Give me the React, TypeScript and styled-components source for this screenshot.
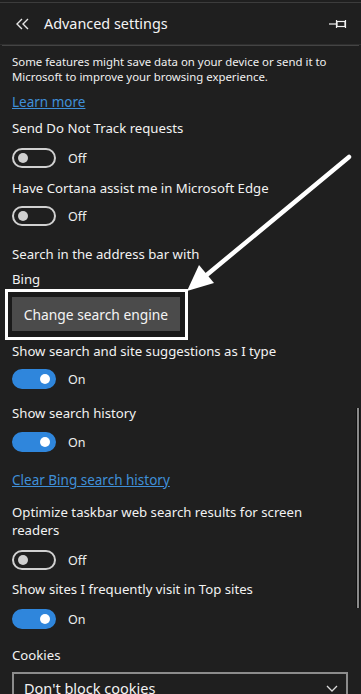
import React from 'react';
import styled, { createGlobalStyle } from 'styled-components';

const GlobalStyle = createGlobalStyle`
  html, body {
    margin: 0;
    padding: 0;
    background: #1f1f1f;
  }
  body {
    font-family: 'Noto Sans', 'Open Sans', sans-serif;
    color: #f2f2f2;
    overflow: hidden;
  }
`;

const Panel = styled.div`
  position: relative;
  width: 361px;
  height: 694px;
  overflow: hidden;
  background: #1f1f1f;
  display: flex;
  flex-direction: column;
`;

const Header = styled.header`
  flex-shrink: 0;
  height: 41px;
  margin-top: 2px;
  border-top: 1px solid #3c3c3c;
  border-bottom: 1px solid #2e2e2e;
  box-shadow: 0 3px 0 -2px #444;
  display: flex;
  align-items: center;
  padding: 0 13px 0 16px;
`;

const BackButton = styled.span`
  display: flex;
  width: 16px;
  margin-right: 12px;
`;

const Title = styled.h1`
  flex: 1;
  margin: 0;
  font-size: 14.4px;
  font-weight: 400;
  color: #f4f4f4;
`;

const Content = styled.div`
  flex-shrink: 0;
  padding: 0 12px;
  margin-top: 9px;
  display: flex;
  flex-direction: column;
  align-items: flex-start;
`;

const Intro = styled.p`
  margin: 0;
  font-size: 11.4px;
  line-height: 15px;
  color: #f0f0f0;
`;

const Link = styled.a<{ $mt: number }>`
  margin-top: ${(p) => p.$mt}px;
  font-size: 13.5px;
  line-height: 20px;
  color: #3f8fd8;
  text-decoration: underline;
  cursor: pointer;
`;

const Label = styled.div<{ $mt: number }>`
  margin-top: ${(p) => p.$mt}px;
  font-size: 13.2px;
  line-height: 19px;
  color: #f2f2f2;
  max-width: 300px;
`;

const WrappedLabel = styled(Label)`
  line-height: 18px;
`;

const ToggleRow = styled.div<{ $mt: number }>`
  margin-top: ${(p) => p.$mt}px;
  display: flex;
  align-items: center;
  gap: 12px;
  height: 20px;
`;

const Track = styled.span<{ $on: boolean }>`
  box-sizing: border-box;
  width: 44px;
  height: 20px;
  border-radius: 10px;
  border: 2px solid ${(p) => (p.$on ? '#2f86dc' : '#d0d0d0')};
  background: ${(p) => (p.$on ? '#2f86dc' : 'transparent')};
  display: flex;
  align-items: center;
  justify-content: ${(p) => (p.$on ? 'flex-end' : 'flex-start')};
  padding: 0 4px;
`;

const Knob = styled.span<{ $on: boolean }>`
  width: 10px;
  height: 10px;
  border-radius: 50%;
  background: ${(p) => (p.$on ? '#ffffff' : '#cfcfcf')};
`;

const State = styled.span`
  font-size: 12.5px;
  color: #eeeeee;
`;

const Highlight = styled.div`
  flex-shrink: 0;
  margin: 0 0 0 -7px;
  border: 3px solid #ffffff;
  padding: 5px 5px 6px 4px;
  background: #1a1a1a;
`;

const Button = styled.button`
  display: block;
  width: 168px;
  height: 34px;
  border: none;
  background: #4b4b4b;
  color: #f4f4f4;
  font-family: 'Noto Sans', 'Open Sans', sans-serif;
  font-size: 13.8px;
  padding: 0;
`;

const Select = styled.div`
  box-sizing: border-box;
  flex-shrink: 0;
  margin-top: 7px;
  width: 336px;
  height: 36px;
  border: 2px solid #8c8c8c;
  display: flex;
  align-items: center;
  justify-content: space-between;
  padding: 0 8px 4px 10px;
  font-size: 14.5px;
  color: #f2f2f2;
`;

const Scrollbar = styled.div`
  position: absolute;
  left: 356px;
  top: 408px;
  width: 2px;
  height: 200px;
  background: #8a8a8a;
  border-left: 1px solid #111;
  border-right: 1px solid #111;
`;

const Annotation = styled.svg`
  position: absolute;
  left: 0;
  top: 0;
  pointer-events: none;
`;

const Toggle: React.FC<{ on: boolean; mt: number }> = ({ on, mt }) => (
  <ToggleRow $mt={mt}>
    <Track $on={on}>
      <Knob $on={on} />
    </Track>
    <State>{on ? 'On' : 'Off'}</State>
  </ToggleRow>
);

export default function App() {
  return (
    <Panel>
      <GlobalStyle />
      <Header>
        <BackButton>
          <svg width="14" height="12" viewBox="0 0 14 12" fill="none" stroke="#e6e6e6" strokeWidth="1.4">
            <polyline points="6,1 1,6 6,11" />
            <polyline points="12,1 7,6 12,11" />
          </svg>
        </BackButton>
        <Title>Advanced settings</Title>
        <svg width="19" height="10" viewBox="0 0 19 10" fill="none" stroke="#f0f0f0" strokeWidth="1.2">
          <line x1="0" y1="5" x2="7" y2="5" />
          <line x1="7.5" y1="1" x2="7.5" y2="9" />
          <rect x="8" y="2.5" width="8" height="5" />
          <line x1="16.5" y1="1" x2="16.5" y2="9" />
        </svg>
      </Header>
      <Content>
        <Intro>
          Some features might save data on your device or send it to
          <br />
          Microsoft to improve your browsing experience.
        </Intro>
        <Link $mt={8}>Learn more</Link>
        <Label $mt={7}>Send Do Not Track requests</Label>
        <Toggle on={false} mt={10} />
        <Label $mt={11}>Have Cortana assist me in Microsoft Edge</Label>
        <Toggle on={false} mt={8} />
        <Label $mt={19}>Search in the address bar with</Label>
        <Label $mt={6}>Bing</Label>
        <Highlight>
          <Button>Change search engine</Button>
        </Highlight>
        <Label $mt={2}>Show search and site suggestions as I type</Label>
        <Toggle on mt={8} />
        <Label $mt={15}>Show search history</Label>
        <Toggle on mt={9} />
        <Link $mt={18}>Clear Bing search history</Link>
        <WrappedLabel $mt={13}>Optimize taskbar web search results for screen readers</WrappedLabel>
        <Toggle on={false} mt={11} />
        <Label $mt={10}>Show sites I frequently visit in Top sites</Label>
        <Toggle on mt={10} />
        <Label $mt={17}>Cookies</Label>
        <Select>
          <span>Don't block cookies</span>
          <svg width="12" height="7" viewBox="0 0 12 7" fill="none" stroke="#dcdcdc" strokeWidth="1.3">
            <polyline points="1,1 6,6 11,1" />
          </svg>
        </Select>
      </Content>
      <Scrollbar />
      <Annotation width="361" height="694" viewBox="0 0 361 694">
        <line x1="349" y1="157" x2="203" y2="278" stroke="#ffffff" strokeWidth="4.5" strokeLinecap="round" />
        <polygon points="187,291 199,265 214,283" fill="#ffffff" />
      </Annotation>
    </Panel>
  );
}
